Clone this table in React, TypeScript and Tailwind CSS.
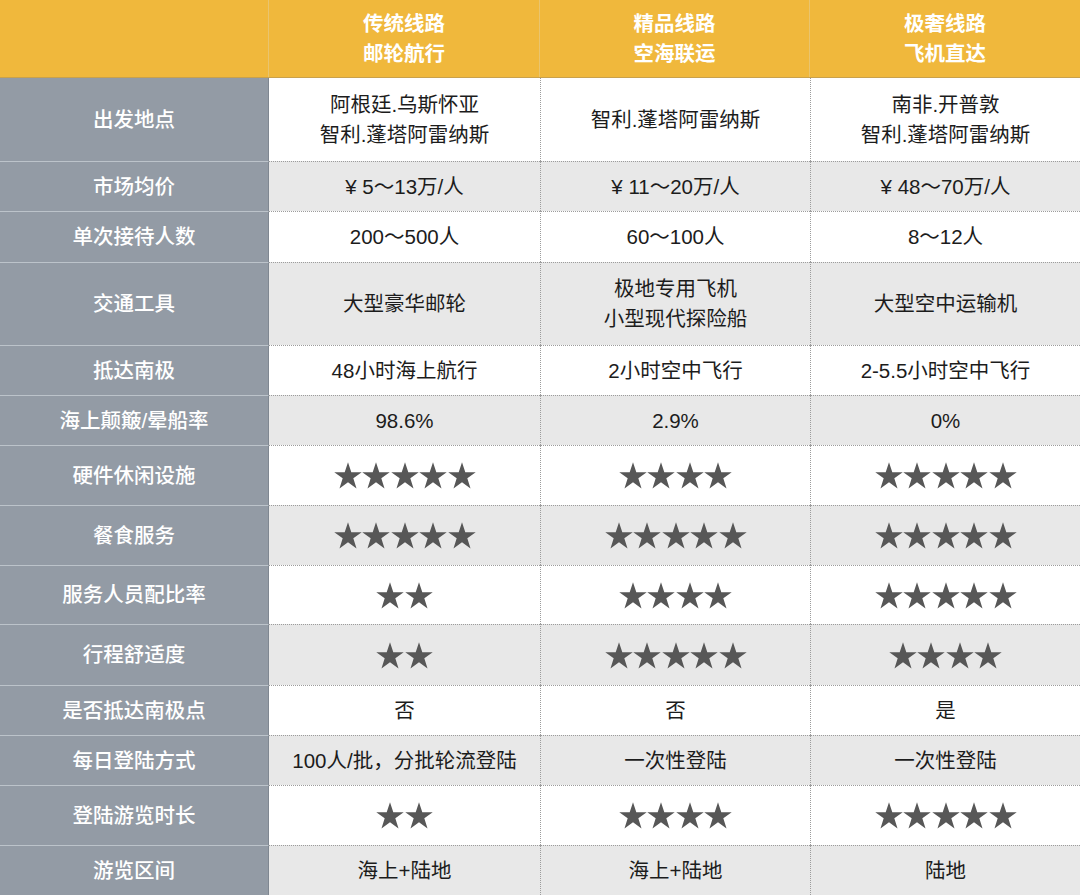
const cols = ['grid', 'grid-cols-[269px_271px_270px_270px]']

type Cell = string | number

interface Row {
  label: string
  h: string
  cells: Cell[]
}

const rows: Row[] = [
  { label: '出发地点', h: 'h-[83px]', cells: ['阿根廷.乌斯怀亚\n智利.蓬塔阿雷纳斯', '智利.蓬塔阿雷纳斯', '南非.开普敦\n智利.蓬塔阿雷纳斯'] },
  { label: '市场均价', h: 'h-[50px]', cells: ['¥ 5～13万/人', '¥ 11～20万/人', '¥ 48～70万/人'] },
  { label: '单次接待人数', h: 'h-[51px]', cells: ['200～500人', '60～100人', '8～12人'] },
  { label: '交通工具', h: 'h-[83px]', cells: ['大型豪华邮轮', '极地专用飞机\n小型现代探险船', '大型空中运输机'] },
  { label: '抵达南极', h: 'h-[50px]', cells: ['48小时海上航行', '2小时空中飞行', '2-5.5小时空中飞行'] },
  { label: '海上颠簸/晕船率', h: 'h-[50px]', cells: ['98.6%', '2.9%', '0%'] },
  { label: '硬件休闲设施', h: 'h-[60px]', cells: [5, 4, 5] },
  { label: '餐食服务', h: 'h-[60px]', cells: [5, 5, 5] },
  { label: '服务人员配比率', h: 'h-[59px]', cells: [2, 4, 5] },
  { label: '行程舒适度', h: 'h-[61px]', cells: [2, 5, 4] },
  { label: '是否抵达南极点', h: 'h-[50px]', cells: ['否', '否', '是'] },
  { label: '每日登陆方式', h: 'h-[50px]', cells: ['100人/批，分批轮流登陆', '一次性登陆', '一次性登陆'] },
  { label: '登陆游览时长', h: 'h-[60px]', cells: [2, 4, 5] },
  { label: '游览区间', h: 'h-[50px]', cells: ['海上+陆地', '海上+陆地', '陆地'] },
]

function Star() {
  return (
    <svg width="28" height="27" viewBox="0 0 100 95" className="block">
      <polygon
        fill="#575757"
        points="50,0 61.8,35.5 99,35.5 69,57.5 80.4,94 50,71.5 19.6,94 31,57.5 1,35.5 38.2,35.5"
      />
    </svg>
  )
}

function Stars({ n }: { n: number }) {
  return (
    <div className="flex items-center gap-[0.5px]">
      {Array.from({ length: n }).map((_, i) => (
        <Star key={i} />
      ))}
    </div>
  )
}

export default function App() {
  return (
    <div
      className="w-[1080px] h-[895px] overflow-hidden bg-white text-[20.5px] leading-[30px]"
      style={{ fontFamily: '"Liberation Sans", "Noto Sans CJK SC", sans-serif' }}
    >
      <div className={[...cols, 'h-[78px] bg-[#f0b83c] border-b border-[#c9a14c]'].join(' ')}>
        <div className="border-r border-[#e9c46e]" />
        {['传统线路\n邮轮航行', '精品线路\n空海联运', '极奢线路\n飞机直达'].map((t, i) => (
          <div
            key={i}
            className={
              'flex items-center justify-center text-center text-white font-bold whitespace-pre-line ' +
              (i < 2 ? 'border-r border-[#e9c46e]' : '')
            }
          >
            {t}
          </div>
        ))}
      </div>
      {rows.map((r, ri) => {
        const bg = ri % 2 === 0 ? 'bg-white' : 'bg-[#e8e8e8]'
        return (
          <div key={ri} className={[...cols, r.h].join(' ')}>
            <div
              className={
                'flex items-center justify-center bg-[#939ba5] text-white font-medium border-r border-[#7f8791] ' +
                (ri > 0 ? 'border-t border-t-[#bcc3ca]' : '')
              }
            >
              {r.label}
            </div>
            {r.cells.map((c, ci) => (
              <div
                key={ci}
                className={
                  'flex items-center justify-center text-center whitespace-pre-line text-[#1c1c1c] border-dotted border-[#9c9c9c] ' +
                  bg +
                  (ri > 0 ? ' border-t' : '') +
                  (ci > 0 ? ' border-l' : '')
                }
              >
                {typeof c === 'number' ? <Stars n={c} /> : c}
              </div>
            ))}
          </div>
        )
      })}
    </div>
  )
}
